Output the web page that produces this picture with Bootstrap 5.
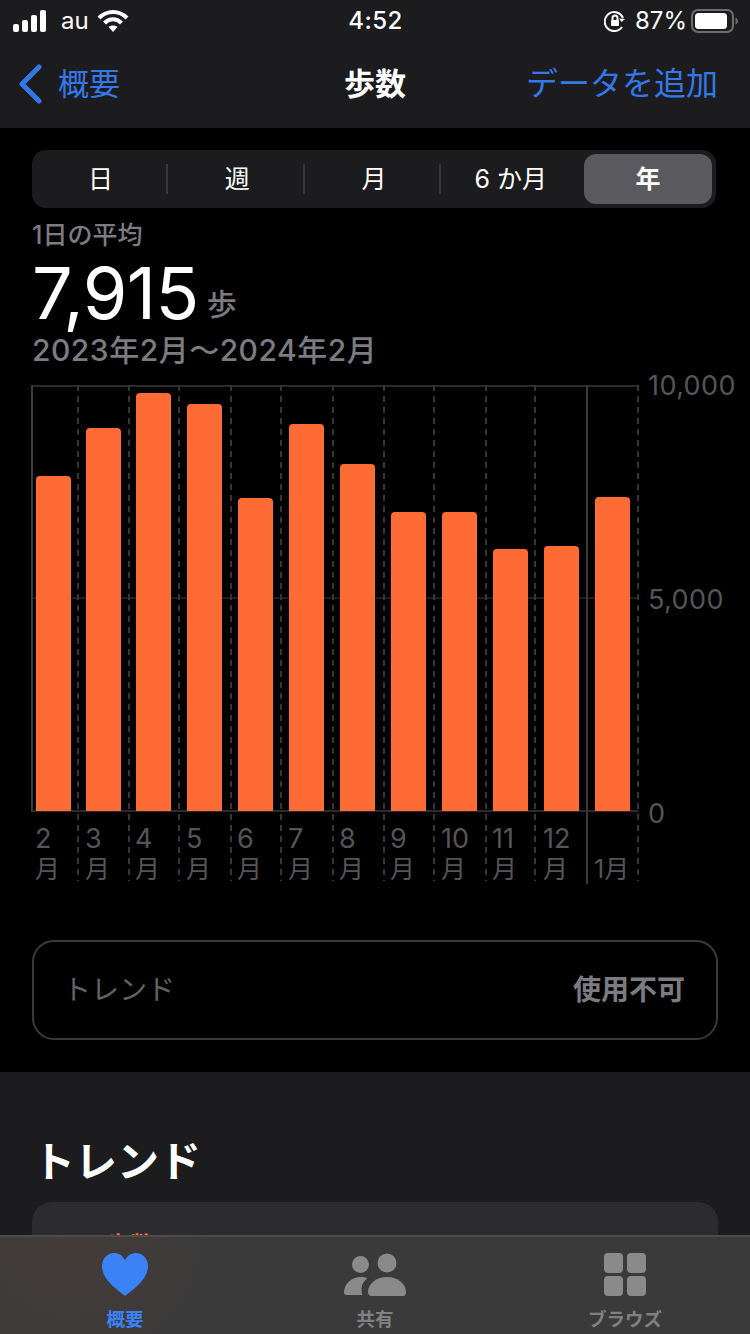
<!DOCTYPE html>
<html lang="ja">
<head>
  <meta charset="UTF-8" />
  <meta name="viewport" content="width=device-width, initial-scale=1.0" />
  <title>歩数</title>
  <link href="https://cdn.jsdelivr.net/npm/bootstrap@5.3.0/dist/css/bootstrap.min.css" rel="stylesheet" />
  <style>
    body { width: 750px; height: 1334px; overflow: hidden; position: relative; background: #000; color: #fff;
      font-family: Inter, "Noto Sans CJK JP", sans-serif; }
    .top-head { background: #1c1c1e; height: 128px; }
    .status-row { height: 40px; padding: 2px 12px 0 13px; font-size: 24px; line-height: 38px; }
    .status-time { width: 100px; text-align: center; font-weight: 500; letter-spacing: .5px; }
    .status-side { width: 300px; }
    .carrier { margin-left: 14px; }
    .lock-pct { margin-left: 9px; }
    .nav-row { height: 88px; padding: 0 32px 0 18px; font-size: 32px; line-height: 88px; color: #3478e8; }
    .nav-back { margin-left: 14px; font-size: 31px; }
    .nav-title { color: #fff; font-weight: 700; font-size: 31px; position: absolute; left: 0; right: 0; text-align: center; }
    .segs { margin: 22px 34px 0 32px; height: 58px; background: #1c1c1e; border-radius: 14px; display: grid; grid-template-columns: repeat(5, 1fr); }
    .seg-item { display: flex; align-items: center; justify-content: center; font-size: 25px; padding-top: 2px; font-weight: 400; position: relative; }
    .seg-line::after { content: ""; position: absolute; right: 1px; top: 14px; height: 30px; width: 2px; background: #38383a; }
    .seg-on { background: #5a5a5e; border-radius: 12px; margin: 4px 4px 4px 5px; font-weight: 700; }
    .avg-label { margin: 13px 0 0 32px; font-size: 25px; line-height: 28px; font-weight: 500; color: #7c7c80; }
    .avg-row { margin: 10px 0 0 32px; height: 68px; line-height: 68px; }
    .avg-num { font-size: 72px; font-weight: 400; letter-spacing: -.6px; }
    .avg-unit { font-size: 30px; font-weight: 500; color: #7c7c80; margin-left: 8px; vertical-align: 4px; }
    .avg-range { margin: 4px 0 0 32px; font-size: 30px; line-height: 38px; font-weight: 500; letter-spacing: .5px; color: #7c7c80; }
    .chart-box { position: relative; margin: 16px 0 0 31px; width: 700px; height: 500px; }
    .chart-lines { position: absolute; left: 0; top: 0; }
    .bars { height: 426px; display: grid; grid-template-columns: 50px 50px repeat(10, 51px); align-items: end; padding-left: 5px; position: relative; }
    .bar { width: 35px; background: #ff6b35; border-radius: 4px 4px 0 0; }
    .months { display: grid; grid-template-columns: 50px 50px repeat(10, 51px); padding-left: 4px; margin-top: 13px; position: relative;
      font-size: 27px; line-height: 30px; color: #555557; font-weight: 400; }
    .months span { display: block; }
    .months span + span { font-size: 25px; }
    .month-single { padding-top: 30px; font-size: 25px; white-space: nowrap; }
    .y-num { position: absolute; left: 617px; font-size: 27px; line-height: 32px; color: #555557; letter-spacing: .4px; }
    .trend-box { margin: 55px 32px 0; height: 100px; border: 2px solid #3a3a3c; border-radius: 22px; padding: 0 31px 0 29px; font-size: 28px; color: #636366; }
    .trend-val { font-weight: 700; color: #7c7c80; }
    .lower { position: absolute; top: 1072px; left: 0; right: 0; height: 262px; background: #1c1c1e; padding: 64px 32px 0; }
    .lower-title { font-size: 42px; line-height: 52px; font-weight: 700; margin: 0 0 14px 1px; }
    .lower-card { height: 120px; background: #2c2c2e; border-radius: 20px; padding: 29px 0 0 43px; font-size: 24px; line-height: 30px; font-weight: 700; color: #ff6b35; }
    .card-name { margin-left: 17px; }
    .tab-bar { position: absolute; left: 0; right: 0; bottom: 0; height: 99px; background: #3a3a3a; border-top: 2px solid #4c4c4e;
      background-image: radial-gradient(circle at 70px 0, rgba(255,107,53,.05), rgba(255,107,53,0) 150px); }
    .tab-item { width: 250px; font-size: 18.500px; line-height: 24px; font-weight: 700; color: #808082; }
    .tab-item .tab-icon { display: block; margin: 16px auto 0; }
    .tab-on { color: #3b82f6; }
    .tab-label { margin-top: 11px; }
  </style>
</head>
<body>

  <div class="top-head">
    <div class="status-row d-flex justify-content-between align-items-center">
      <div class="status-side d-flex align-items-center">
        <svg width="34" height="22" viewBox="0 0 34 22" fill="#fff"><rect x="0" y="14" width="6" height="8" rx="2"/><rect x="9" y="10" width="6" height="12" rx="2"/><rect x="18" y="5" width="6" height="17" rx="2"/><rect x="27" y="0" width="6" height="22" rx="2"/></svg>
        <span class="carrier">au</span>
        <svg class="ms-2" width="32" height="24" viewBox="0 0 32 24" fill="none" stroke="#fff" stroke-width="4"><path d="M2 9c8-8 20-8 28 0"/><path d="M7.500 14c5-5 12-5 17 0"/><path d="M16 23l-4.500-5c2.500-2 6.500-2 9 0z" fill="#fff" stroke="none"/></svg>
      </div>
      <div class="status-time">4:52</div>
      <div class="status-side d-flex align-items-center justify-content-end">
        <svg width="22" height="22" viewBox="0 0 22 22" fill="none" stroke="#fff" stroke-width="2"><path d="M18 17a9.500 9.500 0 1 1 1-9"/><path d="M21 9l-3.500 3-2.500-3.500z" fill="#fff" stroke="none"/><rect x="7" y="10" width="8" height="6" rx="1" fill="#fff" stroke="none"/><path d="M8.500 10V8a2.500 2.500 0 0 1 5 0v2"/></svg>
        <span class="lock-pct">87%</span>
        <svg class="ms-1" width="47" height="24" viewBox="0 0 47 24"><rect x="1" y="1" width="41" height="22" rx="6" fill="none" stroke="#6e6e70" stroke-width="2"/><rect x="4" y="4" width="32" height="16" rx="3.500" fill="#fff"/><path d="M44.500 8.500c1.500.5 2.500 2 2.500 3.500s-1 3-2.500 3.500z" fill="#6a6a6c"/></svg>
      </div>
    </div>
    <div class="nav-row d-flex justify-content-between align-items-center position-relative">
      <div class="d-flex align-items-center">
        <svg width="26" height="40" viewBox="0 0 26 40" fill="none" stroke="#3478e8" stroke-width="5" stroke-linecap="round" stroke-linejoin="round"><path d="M21 3L4 20l17 17"/></svg>
        <span class="nav-back">概要</span>
      </div>
      <div class="nav-title">歩数</div>
      <div>データを追加</div>
    </div>
  </div>

  <div class="segs">
    <div class="seg-item seg-line">日</div>
    <div class="seg-item seg-line">週</div>
    <div class="seg-item seg-line">月</div>
    <div class="seg-item">6 か月</div>
    <div class="seg-item seg-on">年</div>
  </div>

  <div class="avg-label">1日の平均</div>
  <div class="avg-row"><span class="avg-num">7,915</span><span class="avg-unit">歩</span></div>
  <div class="avg-range">2023年2月〜2024年2月</div>

  <div class="chart-box">
    <svg class="chart-lines" width="620" height="500" fill="none" stroke="#2a2a2c" stroke-width="2">
      <path d="M0 1H607M0 426H607" />
      <path d="M0 213H607" stroke="#1f1f21" />
      <path d="M1 0V426M556 0V499" stroke="#3a3a3c" />
      <path d="M47 0V496M98 0V496M148 0V496M200 0V496M250 0V496M302 0V496M353 0V496M403 0V496M455 0V496M504 0V496M607 0V496" stroke="#363638" stroke-dasharray="6 5" />
    </svg>
    <div class="y-num" style="top:-15px">10,000</div>
    <div class="y-num" style="top:199px">5,000</div>
    <div class="y-num" style="top:413px">0</div>
    <div class="bars">
      <div class="bar" style="height:335px"></div>
      <div class="bar" style="height:383px"></div>
      <div class="bar" style="height:418px"></div>
      <div class="bar" style="height:407px"></div>
      <div class="bar" style="height:313px"></div>
      <div class="bar" style="height:387px"></div>
      <div class="bar" style="height:347px"></div>
      <div class="bar" style="height:299px"></div>
      <div class="bar" style="height:299px"></div>
      <div class="bar" style="height:262px"></div>
      <div class="bar" style="height:265px"></div>
      <div class="bar" style="height:314px"></div>
    </div>
    <div class="months">
      <div><span>2</span><span>月</span></div>
      <div><span>3</span><span>月</span></div>
      <div><span>4</span><span>月</span></div>
      <div><span>5</span><span>月</span></div>
      <div><span>6</span><span>月</span></div>
      <div><span>7</span><span>月</span></div>
      <div><span>8</span><span>月</span></div>
      <div><span>9</span><span>月</span></div>
      <div><span>10</span><span>月</span></div>
      <div><span>11</span><span>月</span></div>
      <div><span>12</span><span>月</span></div>
      <div class="month-single">1月</div>
    </div>
  </div>

  <div class="trend-box d-flex justify-content-between align-items-center">
    <span>トレンド</span>
    <span class="trend-val">使用不可</span>
  </div>

  <div class="lower">
    <h2 class="lower-title">トレンド</h2>
    <div class="lower-card d-flex align-items-start">
      <svg class="mt-1" width="14" height="14" viewBox="0 0 14 14" fill="#ff6b35"><path d="M0 2C2 0 6 0 8 2l6 4v8H0z"/></svg>
      <span class="card-name">歩数</span>
    </div>
  </div>

  <div class="tab-bar d-flex text-center">
    <div class="tab-item tab-on">
      <svg class="tab-icon" width="46" height="43" viewBox="0 0 46 43"><path d="M23 43C14 36 0 26 0 13.500 0 5.500 5.500 0 12 0c4.500 0 8.500 2.500 11 7 2.500-4.500 6.500-7 11-7 6.500 0 12 5.500 12 13.500C46 26 32 36 23 43z" fill="#3b82f6"/></svg>
      <div class="tab-label">概要</div>
    </div>
    <div class="tab-item">
      <svg class="tab-icon" width="62" height="43" viewBox="0 0 62 43" fill="#8a8a8a"><circle cx="16.500" cy="11.500" r="8.500"/><circle cx="43" cy="10" r="9.500"/><path d="M0 40c0-9 7-16 17-16 2.500 0 4.500.4 6.500 1.300-3.500 2.500-6 6.500-6 11.700 0 2 .5 3.500 1 5H3c-2 0-3-1-3-2z"/><path d="M24 38C25 30 33 24 43 24s18 6 19 14c.3 3-1 5-3 5H27c-2 0-3.300-2-3-5z"/></svg>
      <div class="tab-label">共有</div>
    </div>
    <div class="tab-item">
      <svg class="tab-icon" width="44" height="43" viewBox="0 0 44 43" fill="#8a8a8a"><rect x="1" y="0" width="19" height="20" rx="4"/><rect x="24" y="0" width="19" height="20" rx="4"/><rect x="1" y="23" width="19" height="20" rx="4"/><rect x="24" y="23" width="19" height="20" rx="4"/></svg>
      <div class="tab-label">ブラウズ</div>
    </div>
  </div>

  <script src="https://cdn.jsdelivr.net/npm/bootstrap@5.3.0/dist/js/bootstrap.bundle.min.js"></script>
</body>
</html>
